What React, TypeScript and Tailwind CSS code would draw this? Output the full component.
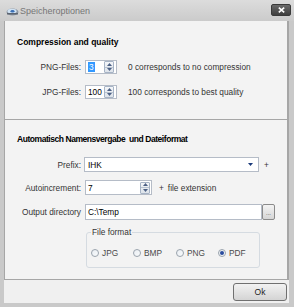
import React from "react";

function Spinner() {
  return (
    <div className="flex flex-col w-[10px] h-[12px] border border-[#a7b4c6] rounded-[1px] bg-gradient-to-b from-[#f4f6f9] to-[#dde3ea]">
      <div className="flex-1 flex items-center justify-center border-b border-[#b8c3d1]">
        <svg width="5" height="3" viewBox="0 0 5 3">
          <path d="M0 3 L2.5 0 L5 3 Z" fill="#4d6185" />
        </svg>
      </div>
      <div className="flex-1 flex items-center justify-center">
        <svg width="5" height="3" viewBox="0 0 5 3">
          <path d="M0 0 L2.5 3 L5 0 Z" fill="#4d6185" />
        </svg>
      </div>
    </div>
  );
}

function Radio({ label, checked = false }: { label: string; checked?: boolean }) {
  return (
    <div className="flex items-center gap-[3px]">
      <div className="w-[8px] h-[8px] rounded-full border border-[#9aa3ad] bg-gradient-to-br from-[#e9edf2] to-[#f9fbfc] flex items-center justify-center">
        {checked && <div className="w-[4px] h-[4px] rounded-full bg-[#2a4c9e]" />}
      </div>
      <span className="text-[#4a4a4a]">{label}</span>
    </div>
  );
}

export default function App() {
  return (
    <div className="w-[294px] h-[307px] flex flex-col bg-[#c9c9c9] font-['Liberation_Sans',Arial,sans-serif] text-[8.3px] leading-[10px] text-black overflow-hidden">
      {/* title bar */}
      <div className="h-[21px] flex items-start bg-gradient-to-b from-[#dcdcdc] to-[#cbcbcb] pl-[6px] pr-[3px]">
        <svg width="13" height="9" viewBox="0 0 13 9" className="mt-[7px]">
          <ellipse cx="6.5" cy="5" rx="6" ry="3.5" fill="#8d96a3" />
          <ellipse cx="6" cy="4.2" rx="4.5" ry="2.4" fill="#cfe2f3" />
          <ellipse cx="6.5" cy="4.2" rx="2" ry="1.2" fill="#3a6fb5" />
          <rect x="1" y="6" width="11" height="1.5" fill="#5c6470" />
        </svg>
        <span className="ml-[1px] mt-[6px] text-[9px] leading-[10px] text-[#767676]">Speicheroptionen</span>
        <div className="ml-auto mt-[4px] w-[20px] h-[12px] rounded-[2px] border border-[#3a3a3a] bg-gradient-to-b from-[#6a6a6a] to-[#3f3f3f] flex items-center justify-center">
          <svg width="7" height="6" viewBox="0 0 7 6">
            <path d="M0.8 0.6 L6.2 5.4 M6.2 0.6 L0.8 5.4" stroke="#ffffff" strokeWidth="1.6" />
          </svg>
        </div>
      </div>

      {/* client */}
      <div className="flex-1 flex flex-col ml-[4px] mr-[5px] mb-[4px] bg-[#f0f0f0]">
        <div className="h-[259px] flex flex-col border-l border-r-2 border-b border-[#a6a6a6] bg-[#f3f3f3]">
          {/* Compression section */}
          <div className="h-[99px] border-b border-[#a6a6a6] pt-[16px]">
            <div className="pl-[12px] h-[10px] font-bold text-[8.5px]">Compression and quality</div>
            <div className="mt-[13px] flex items-center h-[14px]">
              <span className="w-[76px] text-right text-[#333]">PNG-Files:</span>
              <div className="ml-[4px] w-[32px] h-[14px] bg-white border border-[#b5bcc7] flex items-center pl-[2px] pr-[2px]">
                <span className="bg-[#3399ff] text-white px-[1px]">3</span>
                <div className="ml-auto">
                  <Spinner />
                </div>
              </div>
              <span className="ml-[11px] text-[#333]">0 corresponds to no compression</span>
            </div>
            <div className="mt-[11px] flex items-center h-[14px]">
              <span className="w-[76px] text-right text-[#333]">JPG-Files:</span>
              <div className="ml-[4px] w-[32px] h-[14px] bg-white border border-[#b5bcc7] flex items-center pl-[2px] pr-[2px]">
                <span>100</span>
                <div className="ml-auto">
                  <Spinner />
                </div>
              </div>
              <span className="ml-[11px] text-[#333]">100 corresponds to best quality</span>
            </div>
          </div>

          {/* Naming section */}
          <div className="flex-1 pt-[14px]">
            <div className="pl-[12px] h-[10px] font-bold text-[8.5px] tracking-[-0.45px] whitespace-pre">
              Automatisch Namensvergabe  und Dateiformat
            </div>
            <div className="mt-[13px] flex items-center h-[15px]">
              <span className="w-[76px] text-right text-[#333]">Prefix:</span>
              <div className="ml-[3px] w-[175px] h-[15px] bg-white border border-[#b5bcc7] flex items-center pl-[3px] pr-[5px]">
                <span>IHK</span>
                <svg width="5" height="3" viewBox="0 0 5 3" className="ml-auto">
                  <path d="M0 0 L5 0 L2.5 3 Z" fill="#1b3a7a" />
                </svg>
              </div>
              <span className="ml-[5px] text-[#333]">+</span>
            </div>
            <div className="mt-[8px] flex items-center h-[15px]">
              <span className="w-[76px] text-right text-[#333]">Autoincrement:</span>
              <div className="ml-[4px] w-[67px] h-[15px] bg-white border border-[#b5bcc7] flex items-center pl-[2px] pr-[1px]">
                <span>7</span>
                <div className="ml-auto">
                  <Spinner />
                </div>
              </div>
              <span className="ml-[7px] text-[#333]">+</span>
              <span className="ml-[4px] text-[#333]">file extension</span>
            </div>
            <div className="mt-[9px] flex items-center h-[16px]">
              <span className="w-[76px] text-right text-[#333]">Output directory</span>
              <div className="ml-[4px] w-[177px] h-[16px] bg-white border border-[#b5bcc7] flex items-center pl-[2px]">
                <span>C:\Temp</span>
              </div>
              <div className="w-[13px] h-[16px] rounded-[2px] border border-[#8a8a8a] bg-gradient-to-b from-[#f3f3f3] to-[#d6d6d6] flex items-end justify-center pb-[3px]">
                <span className="text-[6px] leading-[6px] text-[#333]">...</span>
              </div>
            </div>
            <div className="mt-[12px] ml-[81px] w-[174px] h-[36px] relative border border-[#d5dbe1] rounded-[3px]">
              <span className="absolute left-[4px] -top-[6px] px-[1px] bg-[#f3f3f3] text-[#333]">File format</span>
              <div className="flex items-center pt-[15px] pl-[4px]">
                <div className="w-[42px]">
                  <Radio label="JPG" />
                </div>
                <div className="w-[43px]">
                  <Radio label="BMP" />
                </div>
                <div className="w-[42px]">
                  <Radio label="PNG" />
                </div>
                <Radio label="PDF" checked />
              </div>
            </div>
          </div>
        </div>

        {/* bottom buttons */}
        <div className="flex-1 flex items-center justify-end pr-[2px]">
          <button className="w-[54px] h-[18px] rounded-[3px] border border-[#707070] bg-gradient-to-b from-[#f2f2f2] to-[#d4d4d4] text-[8.5px] text-[#222]">
            Ok
          </button>
        </div>
      </div>
    </div>
  );
}
